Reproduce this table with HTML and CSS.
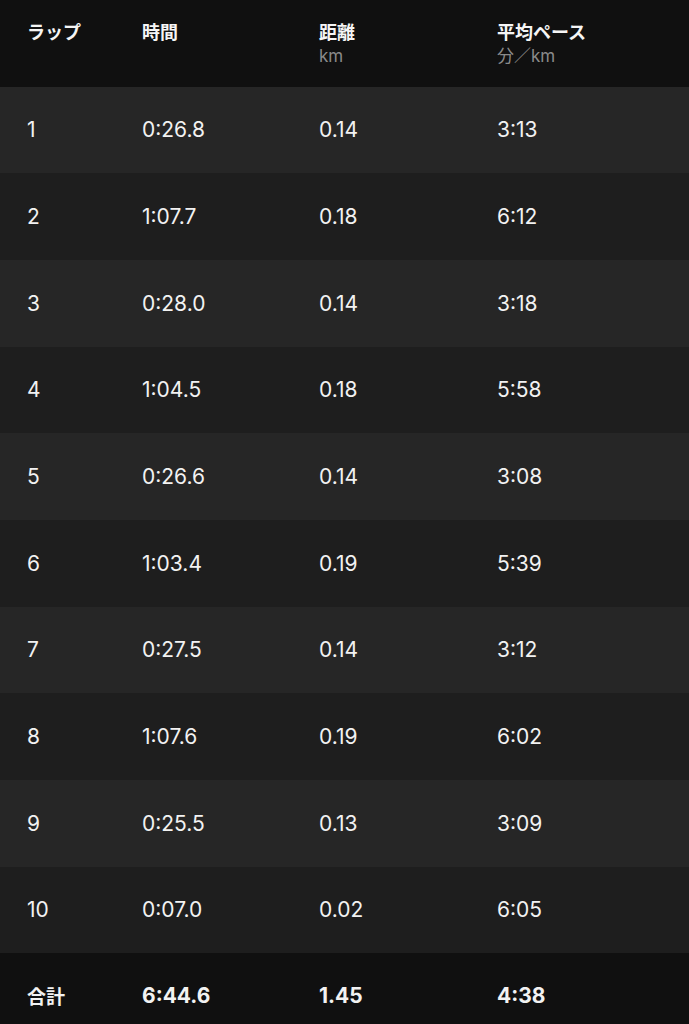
FILE: index.html
```html
<!DOCTYPE html>
<html lang="ja">
<head>
<meta charset="utf-8">
<link rel="stylesheet" href="styles.css">
</head>
<body>
<div class="laps">
  <div class="row head">
    <div class="cell"><span class="title">ラップ</span></div>
    <div class="cell"><span class="title">時間</span></div>
    <div class="cell"><span class="title">距離</span><span class="unit">km</span></div>
    <div class="cell"><span class="title">平均ペース</span><span class="unit">分／km</span></div>
  </div>
  <div class="row odd"><div class="cell">1</div><div class="cell">0:26.8</div><div class="cell">0.14</div><div class="cell">3:13</div></div>
  <div class="row even"><div class="cell">2</div><div class="cell">1:07.7</div><div class="cell">0.18</div><div class="cell">6:12</div></div>
  <div class="row odd"><div class="cell">3</div><div class="cell">0:28.0</div><div class="cell">0.14</div><div class="cell">3:18</div></div>
  <div class="row even"><div class="cell">4</div><div class="cell">1:04.5</div><div class="cell">0.18</div><div class="cell">5:58</div></div>
  <div class="row odd"><div class="cell">5</div><div class="cell">0:26.6</div><div class="cell">0.14</div><div class="cell">3:08</div></div>
  <div class="row even"><div class="cell">6</div><div class="cell">1:03.4</div><div class="cell">0.19</div><div class="cell">5:39</div></div>
  <div class="row odd"><div class="cell">7</div><div class="cell">0:27.5</div><div class="cell">0.14</div><div class="cell">3:12</div></div>
  <div class="row even"><div class="cell">8</div><div class="cell">1:07.6</div><div class="cell">0.19</div><div class="cell">6:02</div></div>
  <div class="row odd"><div class="cell">9</div><div class="cell">0:25.5</div><div class="cell">0.13</div><div class="cell">3:09</div></div>
  <div class="row even"><div class="cell">10</div><div class="cell">0:07.0</div><div class="cell">0.02</div><div class="cell">6:05</div></div>
  <div class="row total"><div class="cell jp">合計</div><div class="cell">6:44.6</div><div class="cell">1.45</div><div class="cell">4:38</div></div>
</div>
</body>
</html>
```
FILE: styles.css
```css
html, body {
  margin: 0;
  padding: 0;
  background: #101010;
}
body {
  width: 689px;
  height: 1024px;
  overflow: hidden;
  color: #f2f2f2;
  font-family: Inter, "Noto Sans CJK JP", sans-serif;
}
.laps {
  display: flex;
  flex-direction: column;
}
.row {
  display: grid;
  grid-template-columns: 115px 177px 178px 1fr;
  padding-left: 27px;
  height: 86.67px;
  box-sizing: border-box;
  align-items: center;
  font-size: 21px;
}
.head {
  background: #101010;
  align-items: start;
  padding-top: 18px;
}
.head .cell {
  display: flex;
  flex-direction: column;
}
.title {
  font-family: "Noto Sans CJK JP", sans-serif;
  font-weight: 700;
  font-size: 18px;
  line-height: 26px;
  color: #f5f5f5;
}
.unit {
  font-family: Inter, "Noto Sans CJK JP", sans-serif;
  font-size: 17px;
  line-height: 24px;
  color: #8a8a8a;
}
.odd { background: #262626; }
.even { background: #1e1e1e; }
.total {
  background: #101010;
  font-weight: 700;
  padding-bottom: 3px;
}
.total .jp {
  font-family: "Noto Sans CJK JP", sans-serif;
  font-size: 19px;
}
```
